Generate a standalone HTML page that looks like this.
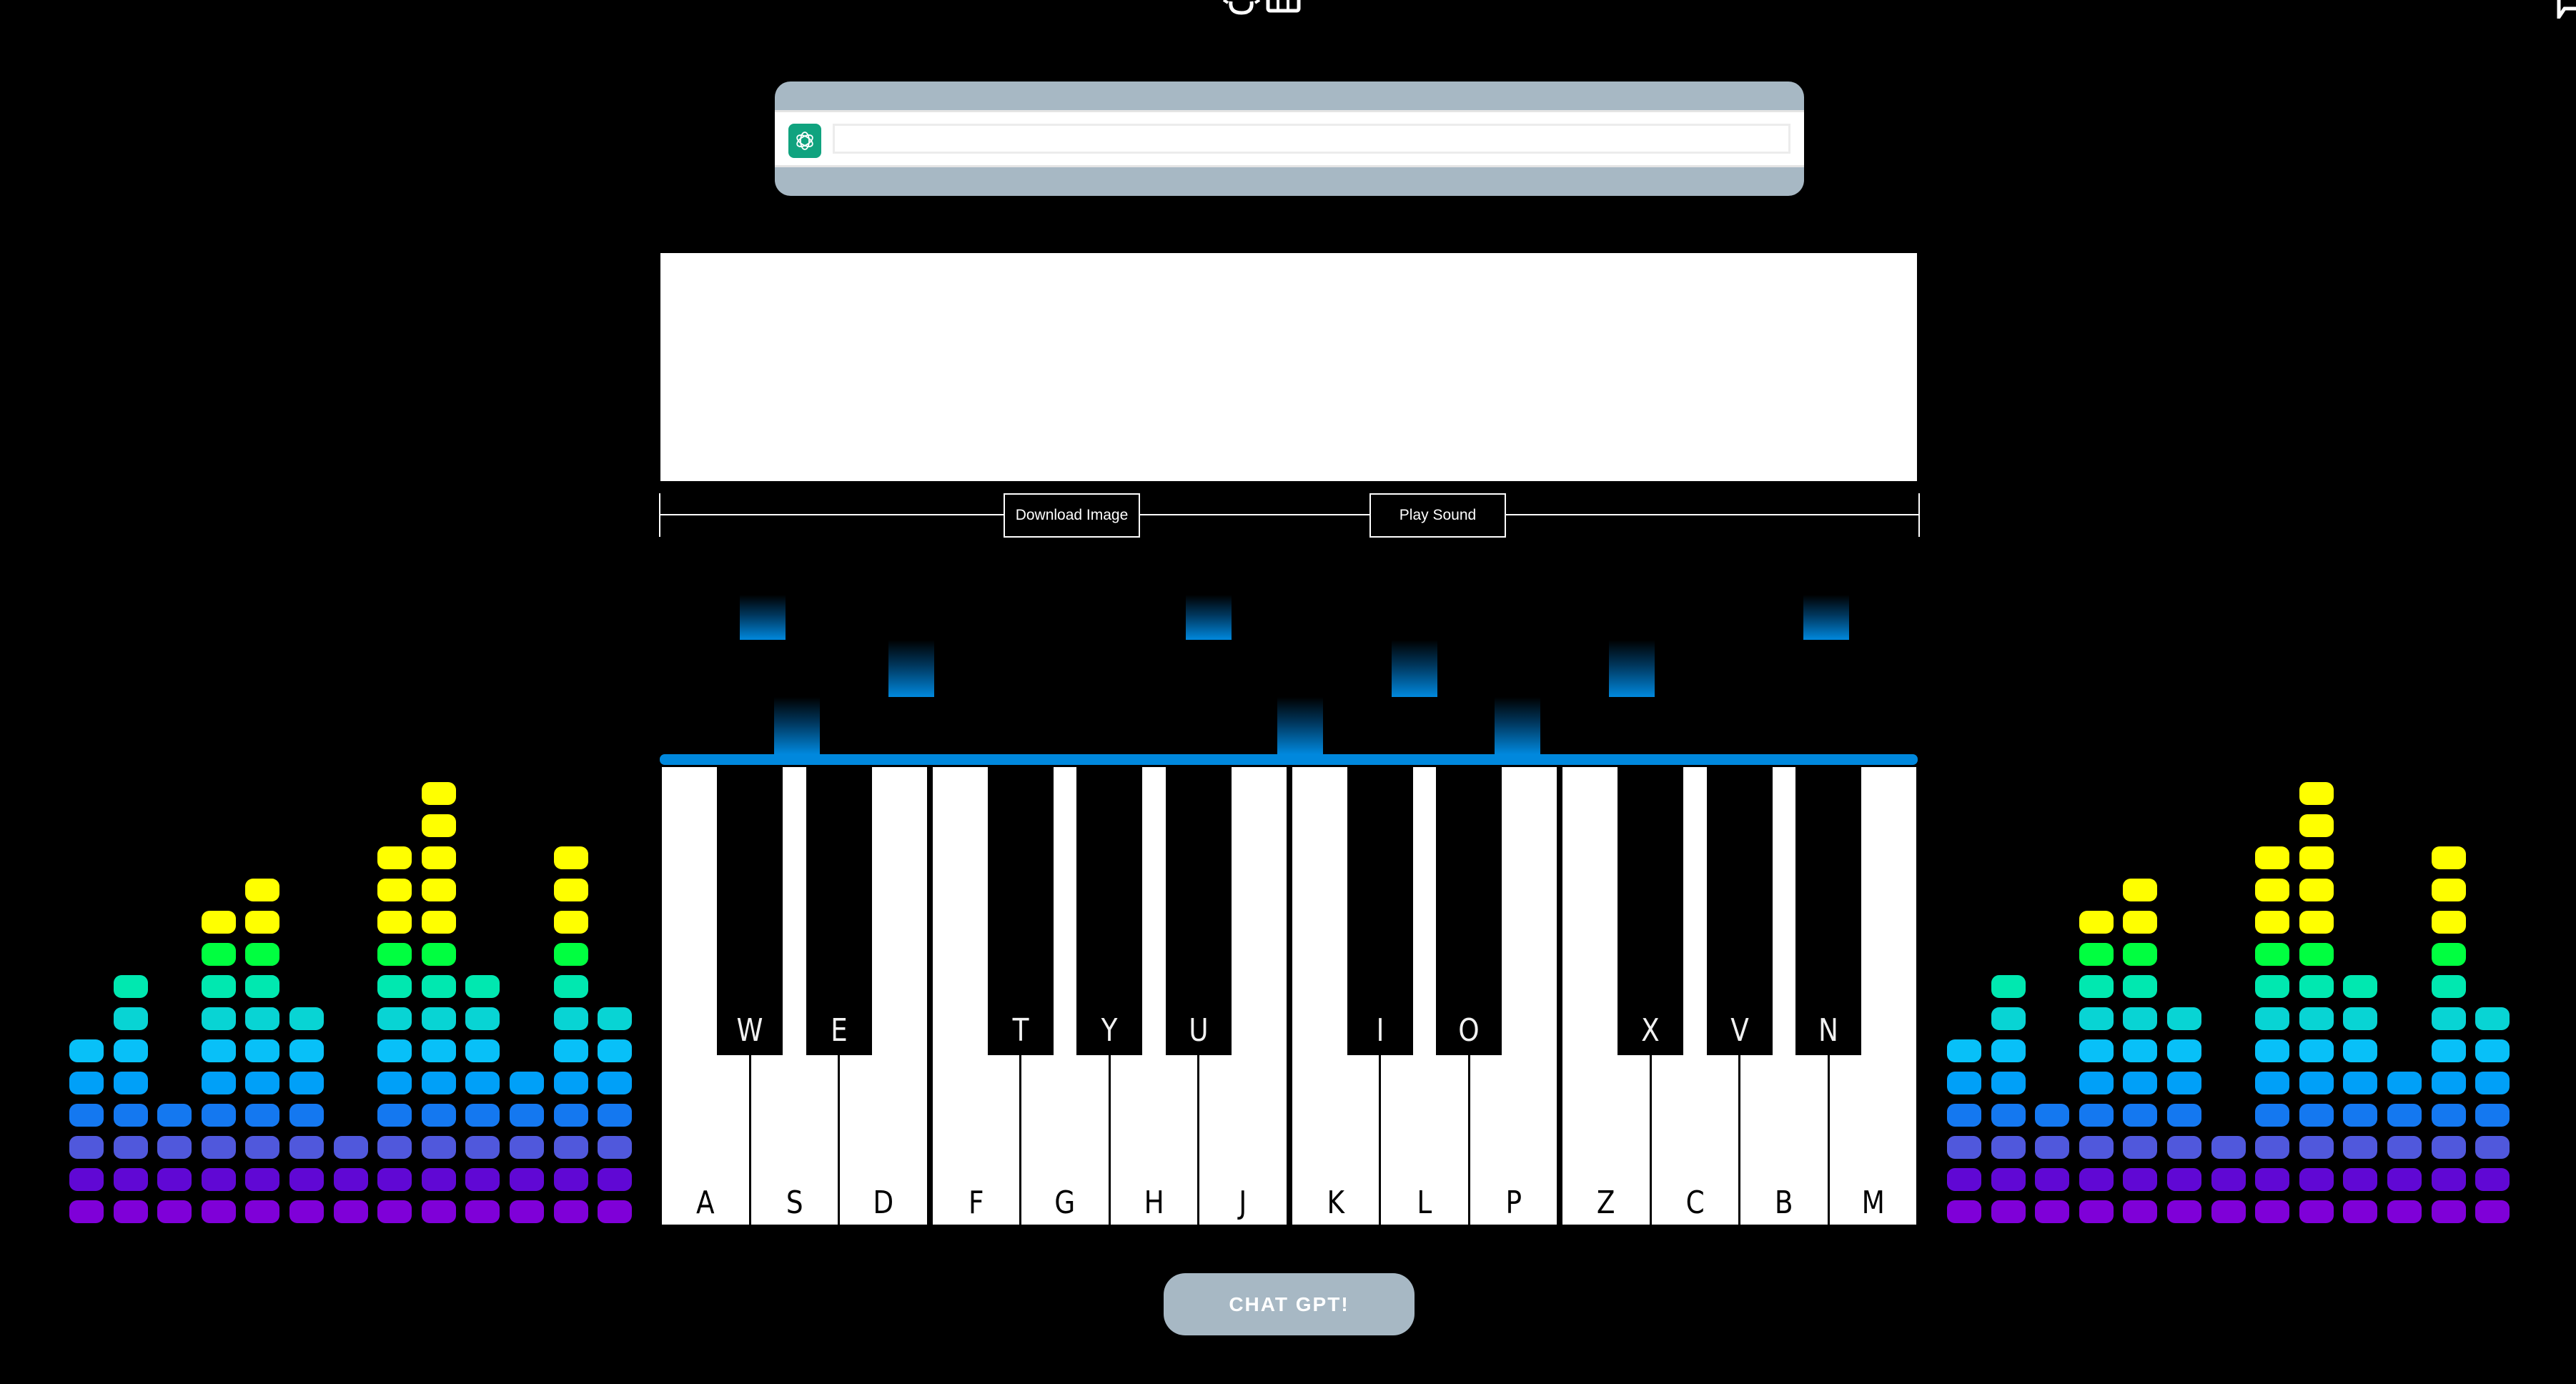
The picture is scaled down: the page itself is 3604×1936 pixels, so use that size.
<!DOCTYPE html>
<html><head><meta charset="utf-8">
<style>
html,body{margin:0;padding:0;background:#000;width:3604px;height:1936px;overflow:hidden;position:relative;font-family:"Liberation Sans",sans-serif}
.abs{position:absolute}
.bar{position:absolute;width:48px;height:32px;border-radius:11px}
.note{position:absolute;width:64px;background:linear-gradient(to bottom,rgba(0,136,221,0) 0%,rgba(0,100,170,.55) 45%,#0088dd 100%)}
.wk{position:absolute;top:1073px;height:640px;width:121.5px;background:#fff}
.wk span{position:absolute;bottom:5px;left:0;right:0;text-align:center;font:44px "DejaVu Sans",sans-serif;color:#000;transform:scaleX(.85)}
.bk{position:absolute;top:1073px;height:403px;width:92px;background:#000}
.bk span{position:absolute;bottom:9px;left:0;right:0;text-align:center;font:44px "DejaVu Sans",sans-serif;color:#f2f2f2;transform:scaleX(.85)}
.btn{position:absolute;top:690px;height:58px;border:2px solid #fff;background:#000;color:#fff;font-size:21px;display:flex;align-items:center;justify-content:center}
</style></head><body>
<svg class="abs" style="left:1700px;top:0" width="130" height="24" viewBox="0 0 130 24">
<path d="M22 2 Q20 18 37 18 Q53 18 51 2" fill="none" stroke="#fff" stroke-width="5"/>
<path d="M12 0 L18 4 M62 0 L56 4" stroke="#fff" stroke-width="4"/>
<rect x="74" y="-6" width="43" height="21" rx="3" fill="none" stroke="#fff" stroke-width="5"/>
<path d="M88 0V14 M102 0V14" stroke="#fff" stroke-width="4"/>
</svg>
<svg class="abs" style="left:3576px;top:0" width="28" height="26"><path d="M4 0V24L12 12H28" fill="none" stroke="#fff" stroke-width="5"/></svg>

<div class="abs" style="left:1084px;top:114px;width:1440px;height:160px;background:#a7b8c4;border-radius:22px"></div>
<div class="abs" style="left:1084px;top:154px;width:1440px;height:80px;background:#fff;border-top:3px solid #e4e4e4;border-bottom:3px solid #e4e4e4;box-sizing:border-box"></div>
<div class="abs" style="left:1103px;top:173px;width:46px;height:48px;background:#10a37f;border-radius:8px"></div>
<svg class="abs" style="left:1108px;top:179px" width="36" height="36" viewBox="0 0 36 36" fill="none" stroke="#fff" stroke-width="1.8">
<ellipse cx="18" cy="18" rx="6" ry="12"/><ellipse cx="18" cy="18" rx="6" ry="12" transform="rotate(60 18 18)"/><ellipse cx="18" cy="18" rx="6" ry="12" transform="rotate(-60 18 18)"/></svg>
<div class="abs" style="left:1165px;top:173px;width:1340px;height:42px;border:3px solid #ececec;box-sizing:border-box;background:#fff"></div>

<div class="abs" style="left:924px;top:354px;width:1758px;height:319px;background:#fff"></div>
<div class="abs" style="left:923px;top:719px;width:1763px;height:2px;background:#fff"></div>
<div class="abs" style="left:922px;top:690px;width:2px;height:61px;background:#fff"></div>
<div class="abs" style="left:2684px;top:690px;width:2px;height:61px;background:#fff"></div>
<div class="btn" style="left:1404px;width:187px">Download Image</div>
<div class="btn" style="left:1916px;width:187px">Play Sound</div>

<div class="note" style="left:1035px;top:832px;height:63px"></div>
<div class="note" style="left:1243px;top:895px;height:80px"></div>
<div class="note" style="left:1083px;top:975px;height:80px"></div>
<div class="note" style="left:1659px;top:832px;height:63px"></div>
<div class="note" style="left:1787px;top:975px;height:80px"></div>
<div class="note" style="left:1947px;top:895px;height:80px"></div>
<div class="note" style="left:2091px;top:975px;height:80px"></div>
<div class="note" style="left:2251px;top:895px;height:80px"></div>
<div class="note" style="left:2523px;top:832px;height:63px"></div>
<div class="abs" style="left:923px;top:1055px;width:1760px;height:15px;background:#0088dd;border-radius:7px"></div>

<div id="piano"></div>
<div id="eq"></div>

<div class="abs" style="left:1628px;top:1781px;width:351px;height:87px;background:#a7b8c4;border-radius:30px;color:#fff;font-weight:bold;font-size:28px;letter-spacing:2px;display:flex;align-items:center;justify-content:center">CHAT GPT!</div>

<script>
(function(){
var p=document.getElementById('piano'),h='';
var groups=[['A','S','D'],['F','G','H','J'],['K','L','P'],['Z','C','B','M']];
var x=926,pos={};
groups.forEach(function(g){g.forEach(function(k,ki){h+='<div class="wk" style="left:'+x+'px"><span>'+k+'</span></div>';pos[k]=x;x+=121.5+(ki<g.length-1?3:0);});x+=8;});
var blacks=[['W','A'],['E','S'],['T','F'],['Y','G'],['U','H'],['I','K'],['O','L'],['X','Z'],['V','C'],['N','B']];
blacks.forEach(function(b){var c=pos[b[1]]+123;h+='<div class="bk" style="left:'+Math.round(c-46)+'px"><span>'+b[0]+'</span></div>';});
p.innerHTML=h;
var cols=['#7f00d8','#6008d4','#5058dc','#1478f0','#00a0f8','#08c0f8','#08d4d4','#00e8b0','#00ff40'];
var hs=[6,8,4,10,11,7,3,12,14,8,5,12,7],e='';
[97,2724].forEach(function(x0){hs.forEach(function(n,i){for(var r=0;r<n;r++){var c=r<9?cols[r]:'#ffff00';e+='<div class="bar" style="left:'+Math.round(x0+i*61.6)+'px;top:'+(1679-r*45)+'px;background:'+c+'"></div>';}});});
document.getElementById('eq').innerHTML=e;
})();
</script>
</body></html>
